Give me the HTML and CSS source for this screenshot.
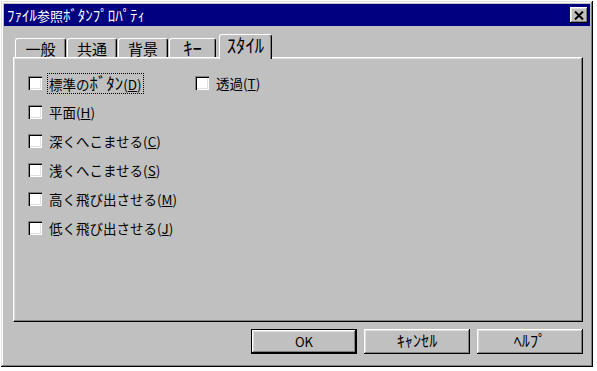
FILE: index.html
```html
<!DOCTYPE html>
<html lang="ja">
  <head>
    <meta charset="UTF-8" />
    <meta name="viewport" content="width=device-width, initial-scale=1.0" />
    <title>ﾌｧｲﾙ参照ﾎﾞﾀﾝﾌﾟﾛﾊﾟﾃｨ</title>
    <link rel="stylesheet" href="styles.css">
  </head>
  <body>
    <div class="window">
      <div class="title-bar">
        <span class="title"><span class="hw">ﾌｧｲﾙ</span>参照<span class="hw">ﾎﾞﾀﾝﾌﾟﾛﾊﾟﾃｨ</span></span>
        <button class="close-btn" aria-label="閉じる">
          <svg width="10" height="9" viewBox="0 0 10 9">
            <path d="M1 0.5 L9 8.5 M9 0.5 L1 8.5" stroke="#000" stroke-width="2" fill="none" />
          </svg>
        </button>
      </div>

      <div class="content">
        <!-- タブ -->
        <div class="tabs">
          <div class="tab tab-w51">一般</div>
          <div class="tab tab-w50">共通</div>
          <div class="tab tab-w50">背景</div>
          <div class="tab tab-w47"><span class="hw">ｷｰ</span></div>
          <div class="tab tab-active"><span class="hw">ｽﾀｲﾙ</span></div>
        </div>

        <div class="panel">
          <div class="options">
            <label class="option">
              <span class="check"></span>
              <span class="text focus">標準の<span class="hw">ﾎﾞﾀﾝ</span>(<u>D</u>)</span>
            </label>
            <label class="option">
              <span class="check"></span>
              <span class="text">透過(<u>T</u>)</span>
            </label>
            <label class="option">
              <span class="check"></span>
              <span class="text">平面(<u>H</u>)</span>
            </label>
            <div></div>
            <label class="option">
              <span class="check"></span>
              <span class="text">深くへこませる(<u>C</u>)</span>
            </label>
            <div></div>
            <label class="option">
              <span class="check"></span>
              <span class="text">浅くへこませる(<u>S</u>)</span>
            </label>
            <div></div>
            <label class="option">
              <span class="check"></span>
              <span class="text">高く飛び出させる(<u>M</u>)</span>
            </label>
            <div></div>
            <label class="option">
              <span class="check"></span>
              <span class="text">低く飛び出させる(<u>J</u>)</span>
            </label>
          </div>
        </div>

        <div class="buttons">
          <button class="btn btn-default">OK</button>
          <button class="btn"><span class="hw">ｷｬﾝｾﾙ</span></button>
          <button class="btn"><span class="hw">ﾍﾙﾌﾟ</span></button>
        </div>
      </div>
    </div>
  </body>
</html>
```

FILE: styles.css
```css
* {
  margin: 0;
  padding: 0;
  box-sizing: border-box;
}

body {
  background: #fff;
  font-family: "Noto Sans CJK JP", "DejaVu Sans", sans-serif;
  font-size: 13px;
  color: #000;
}

/* 半角カナは小さく見えるので少し大きく */
.hw {
  font-size: 125%;
  line-height: 1;
}

.window {
  margin: 1px 0 0 1px;
  width: 592px;
  height: 366px;
  padding: 3px;
  background: #c0c0c0;
  box-shadow: inset -1px -1px #000, inset 1px 1px #dfdfdf, inset -2px -2px #808080, inset 2px 2px #fff;
}

.title-bar {
  height: 22px;
  background: #000080;
  color: #fff;
  display: flex;
  align-items: center;
  justify-content: space-between;
  padding: 0 2px 0 3px;
}

.title {
  font-size: 13px;
  line-height: 1;
}

.title .hw {
  font-size: 115%;
}

.close-btn {
  width: 18px;
  height: 16px;
  background: #c0c0c0;
  border: none;
  display: flex;
  align-items: center;
  justify-content: center;
  box-shadow: inset -1px -1px #000, inset 1px 1px #fff, inset -2px -2px #808080, inset 2px 2px #dfdfdf;
}

.content {
  padding: 8px 7px 0 9px;
}

.tabs {
  height: 23px;
  display: flex;
  align-items: flex-end;
  padding-left: 2px;
}

.tab {
  height: 19px;
  margin-right: 1px;
  display: flex;
  align-items: center;
  justify-content: center;
  font-size: 15px;
  line-height: 1;
  border-top: 1px solid #fff;
  border-left: 1px solid #fff;
  border-right: 1px solid #000;
  border-radius: 3px 3px 0 0;
  box-shadow: inset -1px 0 #808080;
}

.tab-w51 {
  width: 51px;
}

.tab-w50 {
  width: 50px;
}

.tab-w47 {
  width: 47px;
}

.tab-active {
  position: relative;
  z-index: 1;
  width: 53px;
  height: 25px;
  margin-left: 2px;
  margin-bottom: -2px;
  padding-bottom: 4px;
  background: #c0c0c0;
}

.panel {
  height: 265px;
  border-top: 1px solid #fff;
  border-left: 1px solid #fff;
  border-right: 1px solid #000;
  border-bottom: 1px solid #000;
  box-shadow: inset -1px -1px #808080, inset 1px 1px #dfdfdf;
  padding: 18px 0 0 14px;
}

.options {
  display: grid;
  grid-template-columns: 167px auto;
  grid-auto-rows: 29px;
}

.option {
  display: flex;
  align-items: flex-start;
  gap: 6px;
  height: 16px;
}

.check {
  width: 14px;
  height: 14px;
  background: #fff;
  flex-shrink: 0;
  box-shadow: inset 1px 1px #808080, inset 2px 2px #000, inset -1px -1px #fff, inset -2px -2px #dfdfdf;
}

.text {
  font-size: 13.5px;
  line-height: 16px;
  margin-top: -2px;
  padding: 1px 1px;
  white-space: nowrap;
}

.focus {
  outline: 1px dotted #000;
  outline-offset: 0;
}

.buttons {
  display: flex;
  justify-content: flex-end;
  gap: 7px;
  margin-top: 7px;
}

.btn {
  width: 106px;
  height: 25px;
  background: #c0c0c0;
  border: none;
  font-family: inherit;
  font-size: 13px;
  box-shadow: inset -1px -1px #000, inset 1px 1px #fff, inset -2px -2px #808080, inset 2px 2px #dfdfdf;
}

.btn-default {
  border: 1px solid #000;
}
```
